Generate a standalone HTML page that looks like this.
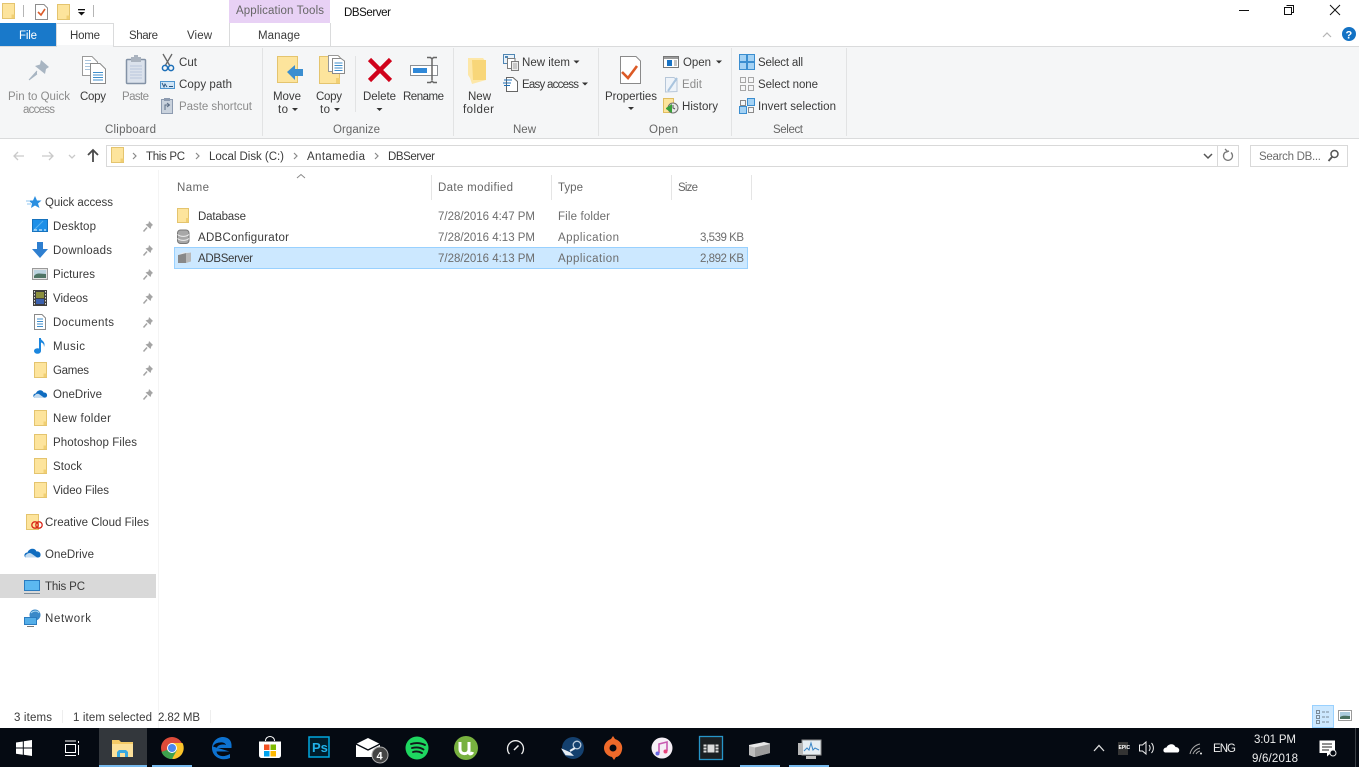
<!DOCTYPE html>
<html><head><meta charset="utf-8"><title>DBServer</title>
<style>
html,body{margin:0;padding:0;background:#fff;width:1359px;height:767px;overflow:hidden}
svg{display:block}
text{font-family:"Liberation Sans",sans-serif;font-size:11.5px;fill:#3a3a3a}
.d{fill:#8c8c8c}.g{fill:#666}.l{fill:#6d6d6d}.k{fill:#111}.w{fill:#fff}
</style></head><body>
<svg width="1359" height="767" viewBox="0 0 1359 767" xmlns="http://www.w3.org/2000/svg">
<defs>
<g id="f"><path d="M.5.5H12.5V15.5H.5Z" fill="#fde49c" stroke="#e4c46e"/><path d="M9.5 15V11.5H12.5V15Z" fill="#f1cf73"/></g>
<g id="p"><path d="M6 0 10 4 8.500 5 7.500 8 2.500 3.500 5.500 2.500Z" fill="#a4a4a4"/><path d="M4 6.500.5 10.500" stroke="#a4a4a4" stroke-width="1.500"/></g>
<g id="cloud"><path d="M1 12C-.5 10 1 7.500 3.500 7.500 5 3 11 2.500 12.500 6.500 15 6 17 8 16.500 10.500 16.300 12 15 12.500 14 12.500H2Z" fill="#0f6cc0"/><path d="M1 11C3 8 6 7 8 9L13 12.500H2Z" fill="#fff" opacity=".75"/></g>
<g id="ar"><path d="M0 0 3 3 0 6" fill="none" stroke="#8a8a8a" stroke-width="1.200"/></g>
<g id="dd"><path d="M0 0H6L3 3Z" fill="#333"/></g>
</defs>

<!-- title -->
<rect width="1359" height="767" fill="#fff"/>
<use href="#f" x="2" y="3"/>
<rect x="23" y="5" width="1" height="12" fill="#b5b5b5"/>
<path d="M35.500 4.500H44L47.500 8V19.500H35.500Z" fill="#fff" stroke="#8e8e8e"/><path d="M38 12 41 15 45 9" fill="none" stroke="#db5b2a" stroke-width="1.600"/>
<use href="#f" x="57" y="4"/>
<rect x="78" y="9" width="7" height="1.300" fill="#111"/><path d="M78 12H85L81.500 15.500Z" fill="#111"/>
<rect x="93" y="5" width="1" height="12" fill="#b5b5b5"/>

<rect x="229" y="0" width="101" height="23" fill="#e8d1f5"/>
<text x="236" y="14" textLength="88" class="g">Application Tools</text>
<text x="344" y="16" textLength="47" class="k">DBServer</text>

<rect x="1239" y="10" width="10" height="1" fill="#111"/>
<path d="M1286.500 5.500H1293.500V12.500H1291.500M1284.500 7.500H1291.500V14.500H1284.500Z" fill="#fff" stroke="#111"/>
<path d="M1330 5 1340 15M1340 5 1330 15" stroke="#111" stroke-width="1"/>

<!-- tabs -->
<rect x="0" y="46" width="1359" height="1" fill="#dadbdc"/>
<rect x="0" y="23" width="56" height="23" fill="#1979ca"/>
<text x="19" y="39" textLength="18" class="w">File</text>
<path d="M56.500 46.500V23.500H113.500V46.500" fill="#fff" stroke="#dadbdc"/><rect x="57" y="45" width="56" height="3" fill="#f5f6f7"/>
<text x="70" y="39" textLength="30">Home</text>
<text x="129" y="39" textLength="29">Share</text>
<text x="187" y="39" textLength="25">View</text>
<path d="M229.500 23V46M330.500 23V46" stroke="#dadbdc"/>
<text x="258" y="39" textLength="42">Manage</text>
<path d="M1323 37 1327 33 1331 37" fill="none" stroke="#b5b5b5" stroke-width="1.200"/>
<circle cx="1349" cy="34" r="7" fill="#1372c4"/><text x="1345.500" y="38.500" class="w" style="font-weight:bold;font-size:11px">?</text>

<!-- ribbon -->
<rect x="0" y="47" width="1359" height="91" fill="#f5f6f7"/>
<rect x="0" y="138" width="1359" height="1" fill="#dadbdc"/>
<g fill="#e2e3e4"><rect x="262" y="48" width="1" height="88"/><rect x="453" y="48" width="1" height="88"/><rect x="598" y="48" width="1" height="88"/><rect x="731" y="48" width="1" height="88"/><rect x="846" y="48" width="1" height="88"/><rect x="355" y="56" width="1" height="56"/></g>

<!-- pin -->
<path d="M41 60 49 67 46 69 45 74 35 66 40 64.500Z" fill="#a8b5c2"/><path d="M37 71 29 80 37 74" fill="#a8b5c2" stroke="#a8b5c2"/>
<text x="8" y="100" textLength="62" class="d">Pin to Quick</text>
<text x="23" y="113" textLength="32" class="d">access</text>
<!-- copy -->
<path d="M82.500 56.500H92L97.500 62V75.500H82.500Z" fill="#fff" stroke="#9a9a9a"/>
<path d="M85 60.500H91M85 63.500H95M85 66.500H95M85 69.500H95" stroke="#a9c4dc"/>
<path d="M90.500 63.500H100L105.500 69V83.500H90.500Z" fill="#fff" stroke="#8a8a8a"/>
<path d="M93 72.500H103M93 75H103M93 77.500H103M93 80H103" stroke="#3f8ecb"/>
<text x="80" y="100" textLength="26">Copy</text>
<!-- paste -->
<rect x="126.500" y="59.500" width="19" height="24" rx="1" fill="#dbe2ec" stroke="#8392a6" stroke-width="1.500"/>
<rect x="131" y="57" width="10" height="5" fill="#aab3bf"/><rect x="134" y="55" width="4" height="3" fill="#aab3bf"/>
<path d="M130 66H142M130 69H142M130 72H142M130 75H142M130 78H142" stroke="#b9c7dc"/>
<text x="122" y="100" textLength="27" class="d">Paste</text>
<!-- cut -->
<path d="M172 54 165 66M163 54 170 66" stroke="#666" stroke-width="1.300" fill="none"/>
<circle cx="165" cy="68" r="2.600" fill="none" stroke="#1c6fb8" stroke-width="1.500"/><circle cx="171" cy="68" r="2.600" fill="none" stroke="#1c6fb8" stroke-width="1.500"/>
<text x="179" y="66" textLength="18">Cut</text>
<rect x="160.500" y="81.500" width="14" height="7" fill="#cfe4f6" stroke="#4d94cf"/><path d="M162 83 164 87 165 84 167 87M169 86.500H173" stroke="#27527e" fill="none" stroke-width=".9"/>
<text x="179" y="88" textLength="53">Copy path</text>
<rect x="161.500" y="99.500" width="11" height="14" fill="#c9d2dd" stroke="#8d9bb0"/><rect x="164" y="98" width="6" height="3" fill="#8d9bb0"/><path d="M165 110V105H169M167 103 169.500 105 167 107" stroke="#5c6d85" fill="none"/>
<text x="179" y="110" textLength="73" class="d">Paste shortcut</text>
<text x="105" y="133" textLength="51" class="g">Clipboard</text>
<!-- move -->
<path d="M277.500 56.500H297.500V82.500H277.500Z" fill="#fde49c" stroke="#e4c46e"/>
<path d="M287 72 295 65V69H303V76H295V80Z" fill="#3b8ed0"/>
<text x="273" y="100" textLength="28">Move</text>
<text x="278" y="113" textLength="10">to</text><use href="#dd" x="292" y="108"/>
<!-- copy to -->
<path d="M319.500 56.500H339.500V83.500H319.500Z" fill="#fde49c" stroke="#e4c46e"/><path d="M336 78V83H340V78Z" fill="#f1cf73"/>
<path d="M328.500 55.500H338L341 58.500V71.500H328.500Z" fill="#fff" stroke="#999"/>
<path d="M332.500 58.500H341L344.500 61V73.500H332.500Z" fill="#fff" stroke="#8a8a8a"/><path d="M334.500 63H342.500M334.500 65.500H342.500M334.500 68H342.500M334.500 70.500H342.500" stroke="#3f8ecb"/>
<text x="316" y="100" textLength="26">Copy</text>
<text x="320" y="113" textLength="10">to</text><use href="#dd" x="334" y="108"/>
<!-- delete -->
<path d="M369.500 59.500 390.500 80.500M390.500 59.500 369.500 80.500" stroke="#d0021b" stroke-width="4.500"/>
<text x="363" y="100" textLength="33">Delete</text><use href="#dd" x="376.500" y="108"/>
<!-- rename -->
<path d="M410.500 65.500H437.500V75.500H410.500Z" fill="#fff" stroke="#8b8f94"/><rect x="413" y="68" width="14" height="5" fill="#2f88d8"/>
<path d="M427 57.500H430.500L432 59 433.500 57.500H437M432 59V80M427 82.500H430.500L432 81 433.500 82.500H437" fill="none" stroke="#666" stroke-width="1.500"/>
<text x="403" y="100" textLength="41">Rename</text>
<text x="333" y="133" textLength="47" class="g">Organize</text>
<!-- new folder -->
<path d="M468 58H483L486 62V80L472 84 470 78 468 75Z" fill="#fde7a8"/><path d="M472 60H486V80H473Z" fill="#f8d679"/>
<text x="468" y="100" textLength="23">New</text>
<text x="463" y="113" textLength="31">folder</text>
<!-- new item -->
<rect x="503.500" y="54.500" width="11" height="9" fill="#e9f2fa" stroke="#4f86b3"/><rect x="505" y="56" width="3" height="2" fill="#4f86b3"/>
<path d="M507.500 58.500H515V68.500H507.500Z" fill="#fff" stroke="#7c7c7c"/><path d="M511.500 61.500H518.500V70.500H511.500Z" fill="#eee" stroke="#7c7c7c"/><path d="M513 64H517M513 66H517M513 68H517" stroke="#8a8a8a" stroke-width=".8"/>
<text x="522" y="66" textLength="48">New item</text><use href="#dd" x="573.500" y="60.500"/>
<path d="M506.500 77.500H513L517.500 81.500V91.500H506.500Z" fill="#fff" stroke="#666"/><path d="M504 80H512M503 83H511M504 85.500H510" stroke="#1f6fb5"/>
<text x="522" y="88" textLength="57">Easy access</text><use href="#dd" x="582" y="82.500"/>
<text x="513" y="133" textLength="23" class="g">New</text>
<!-- properties -->
<path d="M620.500 56.500H636L640.500 61V83.500H620.500Z" fill="#fff" stroke="#8a8a8a"/><path d="M622 72 628 78 637 66" fill="none" stroke="#dc5a26" stroke-width="2.600"/>
<text x="605" y="100" textLength="52">Properties</text><use href="#dd" x="628" y="107"/>
<!-- open -->
<rect x="663.500" y="56.500" width="15" height="11" fill="#fff" stroke="#777"/><rect x="664" y="57" width="14" height="2" fill="#9b9b9b"/><rect x="667" y="60" width="5" height="6" fill="#1973c4"/><path d="M674 61H677M674 63H677M674 65H677" stroke="#888"/>
<text x="683" y="66" textLength="28">Open</text><use href="#dd" x="716" y="60.500"/>
<path d="M665.500 77.500H674L677 80V91.500L665.500 92Z" fill="#eef3f9" stroke="#b6c6d8"/><path d="M668 91 677 78" stroke="#a9c4de" stroke-width="2"/>
<text x="682" y="88" textLength="20" class="d">Edit</text>
<rect x="663.500" y="98.500" width="10" height="14" fill="#fde49c" stroke="#e0bd60"/>
<circle cx="673" cy="108" r="5" fill="#e9e9e9" stroke="#6f6f6f"/><path d="M673 105V108L675 109" stroke="#555" fill="none"/><path d="M666 108 672 104V113L666 109Z" fill="#3aa13a"/>
<text x="682" y="110" textLength="36">History</text>
<text x="649" y="133" textLength="29" class="g">Open</text>
<!-- select -->
<g stroke="#3b8ed0"><rect x="739.500" y="54.500" width="7" height="7" fill="#a4d2f4"/><rect x="747.500" y="54.500" width="7" height="7" fill="#a4d2f4"/><rect x="739.500" y="62.500" width="7" height="7" fill="#a4d2f4"/><rect x="747.500" y="62.500" width="7" height="7" fill="#a4d2f4"/></g>
<text x="758" y="66" textLength="45">Select all</text>
<g stroke="#a6a6a6" fill="none"><rect x="740.500" y="77.500" width="5" height="5"/><rect x="748.500" y="77.500" width="5" height="5"/><rect x="740.500" y="85.500" width="5" height="5"/><rect x="748.500" y="85.500" width="5" height="5"/></g>
<text x="758" y="88" textLength="60">Select none</text>
<rect x="740.500" y="100.500" width="5" height="5" fill="none" stroke="#8a8a8a"/><rect x="747.500" y="98.500" width="7" height="7" fill="#a4d2f4" stroke="#3b8ed0"/><rect x="739.500" y="106.500" width="7" height="7" fill="#a4d2f4" stroke="#3b8ed0"/><rect x="748.500" y="107.500" width="5" height="5" fill="none" stroke="#8a8a8a"/>
<text x="758" y="110" textLength="78">Invert selection</text>
<text x="773" y="133" textLength="30" class="g">Select</text>

<!-- address bar -->
<g fill="none" stroke-width="1.300">
<path d="M24 156H14M18 152 14 156 18 160" stroke="#c9c9c9"/>
<path d="M42 156H53M49 152 53 156 49 160" stroke="#c9c9c9"/>
<path d="M69 155 72 158 75 155" stroke="#c9c9c9"/>
<path d="M93 162V150M88 155 93 150 98 155" stroke="#4a4a4a" stroke-width="1.800"/>
</g>
<rect x="106.500" y="145.500" width="1132" height="21" fill="#fff" stroke="#d9d9d9"/>
<use href="#f" x="111" y="147" />
<use href="#ar" x="133" y="153"/><use href="#ar" x="196" y="153"/><use href="#ar" x="294" y="153"/><use href="#ar" x="375" y="153"/>
<text x="146" y="160" textLength="39">This PC</text>
<text x="209" y="160" textLength="75">Local Disk (C:)</text>
<text x="307" y="160" textLength="58">Antamedia</text>
<text x="388" y="160" textLength="47">DBServer</text>
<path d="M1204 154 1208 158 1212 154" fill="none" stroke="#555" stroke-width="1.500"/>
<rect x="1217" y="146" width="1" height="20" fill="#d9d9d9"/>
<path d="M1231 152.500A4.500 4.500 0 1 1 1225 152.500L1229 151M1225 149 1228 152" fill="none" stroke="#777" stroke-width="1.300"/>
<rect x="1250.500" y="145.500" width="97" height="21" fill="#fff" stroke="#d9d9d9"/>
<text x="1259" y="160" textLength="62" class="l">Search DB...</text>
<circle cx="1334.500" cy="154" r="3.500" fill="none" stroke="#555" stroke-width="1.500"/><path d="M1332 157 1328.500 161" stroke="#555" stroke-width="1.800"/>

<!-- sidebar -->
<path d="M35 196 37 200.500H41.500L38 203.500 39.500 208 35 205.500 31 208 32 203.500 28.500 200.500 33 200.500Z" fill="#2b8fe0"/><path d="M26 201H30M27 204H31" stroke="#8cc4f0"/>
<text x="45" y="206" textLength="68">Quick access</text>

<rect x="32.500" y="219.500" width="15" height="12" fill="#1e90e8" stroke="#1672bd"/><path d="M33 231 43 221" stroke="#5bb2f0"/><path d="M34 230H46" stroke="#fff" stroke-dasharray="3 2"/>
<text x="53" y="230" textLength="43">Desktop</text><use href="#p" x="143" y="221"/>

<path d="M37 242H43V249H48L40 258 32 249H37Z" fill="#2e7fd0"/>
<text x="53" y="254" textLength="59">Downloads</text><use href="#p" x="143" y="245"/>

<rect x="32.500" y="268.500" width="15" height="11" fill="#e3e3e3" stroke="#9a9a9a"/><rect x="34" y="270" width="12" height="8" fill="#bcd4e0"/><path d="M34 276C37 272 41 274 46 274V278H34Z" fill="#4f7565"/>
<text x="53" y="278" textLength="42">Pictures</text><use href="#p" x="143" y="269"/>

<rect x="33" y="290" width="14" height="16" fill="#3e3e3e"/><rect x="36" y="292" width="8" height="6" fill="#8b8f3d"/><rect x="36" y="299" width="8" height="5" fill="#3b60ad"/><path d="M34.500 291V305M45.500 291V305" stroke="#ddd" stroke-dasharray="1.500 1.500"/>
<text x="53" y="302" textLength="35">Videos</text><use href="#p" x="143" y="293"/>

<path d="M34.500 314.500H42L45.500 318V329.500H34.500Z" fill="#fff" stroke="#8a8a8a"/><path d="M37 319H43M37 321.500H43M37 324H43M37 326.500H43" stroke="#3f8ecb"/>
<text x="53" y="326" textLength="61">Documents</text><use href="#p" x="143" y="317"/>

<path d="M40 338V351" stroke="#1b86de" stroke-width="2"/><ellipse cx="37.500" cy="351" rx="3.500" ry="2.800" fill="#1b86de"/><path d="M40 338C42 341 46 342 44 347 44 343 42 343 40 342Z" fill="#1b86de"/>
<text x="53" y="350" textLength="32">Music</text><use href="#p" x="143" y="341"/>

<use href="#f" x="34" y="362"/>
<text x="53" y="374" textLength="36">Games</text><use href="#p" x="143" y="365"/>

<use href="#cloud" transform="translate(33 387) scale(.85)"/>
<text x="53" y="398" textLength="49">OneDrive</text><use href="#p" x="143" y="389"/>

<use href="#f" x="34" y="410"/><text x="53" y="422" textLength="58">New folder</text>
<use href="#f" x="34" y="434"/><text x="53" y="446" textLength="84">Photoshop Files</text>
<use href="#f" x="34" y="458"/><text x="53" y="470" textLength="29">Stock</text>
<use href="#f" x="34" y="482"/><text x="53" y="494" textLength="56">Video Files</text>

<use href="#f" x="26" y="514"/>
<circle cx="35" cy="525" r="3.200" fill="none" stroke="#d8281a" stroke-width="1.300"/><circle cx="39" cy="525" r="3.200" fill="none" stroke="#d8281a" stroke-width="1.300"/>
<text x="45" y="526" textLength="104">Creative Cloud Files</text>
<use href="#cloud" x="24" y="545"/><text x="45" y="558" textLength="49">OneDrive</text>

<rect x="0" y="574" width="156" height="24" fill="#d9d9d9"/>
<rect x="24.500" y="580.500" width="15" height="10" fill="#5cb8f0" stroke="#2a7cc0"/><rect x="24" y="593" width="16" height="1" fill="#7a8a98"/>
<text x="45" y="590" textLength="40">This PC</text>

<circle cx="35" cy="615" r="5.500" fill="#3a89c8"/><path d="M31 613C34 610 38 611 39 613" stroke="#a9d8f3" fill="none"/>
<rect x="24.500" y="617.500" width="12" height="7" fill="#54aee8" stroke="#2a7cc0"/><path d="M27 626.500H34" stroke="#777"/>
<text x="45" y="622" textLength="46">Network</text>

<rect x="158" y="170" width="1" height="558" fill="#f4f4f4"/>

<!-- file list -->
<path d="M297 178 301 174.500 305 178" fill="none" stroke="#8a8a8a"/>
<text x="177" y="191" textLength="32" class="g">Name</text>
<text x="438" y="191" textLength="75" class="g">Date modified</text>
<text x="558" y="191" textLength="25" class="g">Type</text>
<text x="678" y="191" textLength="20" class="g">Size</text>
<g fill="#e5e5e5"><rect x="431" y="175" width="1" height="25"/><rect x="551" y="175" width="1" height="25"/><rect x="671" y="175" width="1" height="25"/><rect x="751" y="175" width="1" height="25"/></g>

<path d="M177.500 208.500H188.500V222.500H177.500Z" fill="#fde49c" stroke="#e4c46e"/><path d="M186 222V218H188.500V222Z" fill="#f1cf73"/>
<text x="198" y="220" textLength="48">Database</text>
<text x="438" y="220" textLength="97" class="l">7/28/2016 4:47 PM</text>
<text x="558" y="220" textLength="52" class="l">File folder</text>

<rect x="177.500" y="230" width="11.500" height="13.500" rx="3" fill="#a8a8a8" stroke="#777"/><path d="M177.500 234.500C180.500 237 186 237 189 234.500M177.500 238.500C180.500 241 186 241 189 238.500" stroke="#eee" fill="none"/>
<text x="198" y="241" textLength="91">ADBConfigurator</text>
<text x="438" y="241" textLength="97" class="l">7/28/2016 4:13 PM</text>
<text x="558" y="241" textLength="61" class="l">Application</text>
<text x="700" y="241" textLength="44" class="l">3,539 KB</text>

<rect x="174.500" y="247.500" width="573" height="21" fill="#cce8ff" stroke="#99d1ff"/>
<path d="M178 255 186 253V263L178 263Z" fill="#888"/><path d="M186 253 191 252.500V261.500L186 263Z" fill="#b8b8b8"/><path d="M178 255 183 252.500 191 252.500 186 253Z" fill="#e8e8e8"/>
<text x="198" y="262" textLength="55">ADBServer</text>
<text x="438" y="262" textLength="97" class="l">7/28/2016 4:13 PM</text>
<text x="558" y="262" textLength="61" class="l">Application</text>
<text x="700" y="262" textLength="44" class="l">2,892 KB</text>

<!-- status -->
<text x="14" y="721" textLength="38">3 items</text>
<rect x="62" y="710" width="1" height="13" fill="#eee"/>
<text x="73" y="721" textLength="79">1 item selected</text>
<text x="158" y="721" textLength="42">2.82 MB</text>
<rect x="210" y="710" width="1" height="13" fill="#eee"/>
<rect x="1312.500" y="705.500" width="21" height="22" fill="#cce8ff" stroke="#99d1ff"/>
<g fill="none" stroke="#7a8a98"><rect x="1316.500" y="710.500" width="3" height="3"/><rect x="1316.500" y="715.500" width="3" height="3"/><rect x="1316.500" y="720.500" width="3" height="3"/><path d="M1322 712H1330M1322 717H1330M1322 722H1330" stroke-dasharray="3 1"/></g>
<rect x="1338.500" y="710.500" width="13" height="10" fill="#fff" stroke="#9a9a9a"/><rect x="1340" y="712" width="10" height="7" fill="#aacbdc"/><path d="M1340 717C1343 715 1346 716 1350 716V719H1340Z" fill="#48705f"/>

<!-- taskbar -->
<rect x="0" y="728" width="1359" height="39" fill="#050a12"/>
<g fill="#fff"><path d="M16 742.500 22.800 741.500V747.500H16ZM23.800 741.300 32 740V747.500H23.800ZM16 748.500H22.800V754.700L16 753.700ZM23.800 748.500H32V756L23.800 754.800Z"/></g>
<path d="M65.500 744.500H75.500V752.500H65.500ZM65 741H76M65 755.500H76M78.500 741V743M78.500 745V755" fill="none" stroke="#fff" stroke-width="1"/>

<rect x="99" y="728" width="48" height="39" fill="#33373c"/>
<rect x="99" y="765" width="48" height="2" fill="#76b9ed"/>
<path d="M112 740H119L121 742H133V757H112Z" fill="#f3c966"/><rect x="112" y="744" width="21" height="13" fill="#fbe09a"/>
<path d="M117 757V752L119 750H126L128 752V757H125V753H120V757Z" fill="#3aa9e0"/>

<rect x="152" y="765" width="40" height="2" fill="#76b9ed"/>
<circle cx="172" cy="748" r="11" fill="#dd4b3a"/>
<path d="M172 748 163 754A11 11 0 0 0 172.500 759Z" fill="#3ea24d"/><path d="M172 748 172.500 759A11 11 0 0 0 182.500 743H172Z" fill="#fbc32a"/><path d="M172 748 161.500 752A11 11 0 0 0 172 759L177 750Z" fill="#3ea24d"/>
<circle cx="172" cy="748" r="5" fill="#fff"/><circle cx="172" cy="748" r="4" fill="#4a87ee"/>

<path d="M229.500 752H216.500C217 757 224 758 230 754.500V758.500C222 762 212.500 758 212 749 212 741 219 736 226 738 230.500 739.500 232 743 231.500 748.500H217C217 744.500 225.500 744.500 226 745.500 225 741.500 215 742 213 747" fill="#0d72d0" transform="translate(0 -.5)"/>

<path d="M259 741.500H281V755C281 757 280 758 278 758H262C260 758 259 757 259 755Z" fill="#fff"/><path d="M265.500 741C265.500 735 274.500 735 274.500 741" fill="none" stroke="#fff"/>
<rect x="264" y="744.500" width="5.500" height="5.500" fill="#f25022"/><rect x="270.500" y="744.500" width="5.500" height="5.500" fill="#7fba00"/><rect x="264" y="751" width="5.500" height="5.500" fill="#00a4ef"/><rect x="270.500" y="751" width="5.500" height="5.500" fill="#ffb900"/>

<rect x="309" y="737" width="20" height="20" fill="#001d2b" stroke="#00a8e0" stroke-width="1.500"/>
<text x="312" y="752" style="font-size:13px;font-weight:bold;fill:#22b1e8">Ps</text>

<path d="M356 744 368 738 380 744V757H356Z" fill="#fff"/><path d="M356 744 368 750 380 744" fill="none" stroke="#050a12" stroke-width="1.300"/>
<circle cx="380" cy="755" r="8" fill="#444" stroke="#aaa"/><text x="376.500" y="759.500" class="w" style="font-size:11px;font-weight:bold">4</text>

<circle cx="417" cy="748" r="11.500" fill="#1ed760"/>
<path d="M411 744C416 742.500 421 743 425 745M412 748C416 747 420.500 747.500 423.500 749.500M413 752C416 751 419.500 751.500 422 753" stroke="#12171a" stroke-width="1.900" fill="none" stroke-linecap="round"/>

<circle cx="466" cy="748" r="12" fill="#78b13f"/>
<path d="M460 742V749C460 755 468 755 469 750M469 742V752C469 755 472 754 472.500 752" fill="none" stroke="#fff" stroke-width="3"/>

<path d="M509.500 754A8 8 0 1 1 521.500 754" fill="none" stroke="#eee" stroke-width="1.300"/><path d="M514 750 518.500 745.500" stroke="#eee" stroke-width="1.500"/>

<circle cx="573" cy="748" r="11" fill="#14406e"/>
<path d="M563 750 570 753 572 755 566 754.500Z" fill="#e8eef5" stroke="#e8eef5" stroke-width="1.500"/>
<circle cx="577" cy="745" r="3.800" fill="none" stroke="#b9c9da" stroke-width="1.300"/><path d="M570 751 575 748" stroke="#e8eef5" stroke-width="2"/>

<path d="M613 736 615 739C621 741 623 746 622 750 621 755 618 757 616 757L614 760 612 757C607 756 604 752 604 748 604 743 608 740 611 739Z" fill="#ef6a2a"/><circle cx="613" cy="748" r="3.500" fill="#050a12"/>

<circle cx="662" cy="748" r="10.500" fill="#f5eef5"/>
<path d="M659 753V744L667 742V751" fill="none" stroke="#c85bb0" stroke-width="1.600"/><circle cx="657.500" cy="753.500" r="2" fill="#6a69e0"/><circle cx="665.500" cy="751.500" r="2" fill="#e8447b"/>

<rect x="699.500" y="736.500" width="23" height="23" fill="#1b1f22" stroke="#2795c8" stroke-width="1.300"/>
<path d="M703.500 744.500H718.500V752.500H703.500Z" fill="#dcdcdc"/><path d="M707 744V753M715 744V753M703 747H707M703 750H707M715 747H719M715 750H719" stroke="#1b1f22"/>

<rect x="740" y="765" width="40" height="2" fill="#76b9ed"/>
<path d="M749 745 764 742 770 743.500 770 753 754 757 749 755Z" fill="#e8e8e8"/><path d="M749 746 755 747.500V757L749 755Z" fill="#bdbdbd"/><path d="M755 747.500 770 744V753L755 757Z" fill="#9c9c9c"/>

<rect x="789" y="765" width="40" height="2" fill="#76b9ed"/>
<rect x="802" y="740" width="19" height="15" fill="#e7eef3" stroke="#8e8e8e"/><rect x="798" y="743" width="5" height="12" fill="#b7b7b7"/>
<path d="M804 751 807 748 809 750 811 743 813 750 815 748 819 750" fill="none" stroke="#3b86c7"/><rect x="806" y="756" width="10" height="3" fill="#bcbcbc"/>

<!-- tray -->
<path d="M1094 751 1099 745.500 1104 751" fill="none" stroke="#ddd" stroke-width="1.300"/>
<rect x="1118" y="742" width="10" height="13" fill="#333"/><text x="1118.500" y="749" class="w" style="font-size:5px;font-weight:bold">EPIC</text>
<path d="M1139.500 745H1142.500L1146 742V754L1142.500 751H1139.500Z" fill="none" stroke="#eee"/><path d="M1149 745C1150.500 747 1150.500 749 1149 751M1151.500 743C1154 746 1154 750 1151.500 753" fill="none" stroke="#eee"/>
<path d="M1164 752C1162.500 750 1164 747.500 1166.500 747.500 1168 743.500 1174 743 1175.500 747 1178 747 1180 749 1179 751.500L1178 752.500H1165Z" fill="#fff"/>
<path d="M1190 754C1191 749 1195 745 1200 744M1193 754C1194 751 1196.500 749 1200 748M1196 754C1197 752.500 1198 751.500 1200 751" stroke="#aaa" fill="none"/><circle cx="1201" cy="753.500" r="1" fill="#eee"/>
<text x="1213" y="752" textLength="23" style="fill:#eee">ENG</text>
<text x="1254" y="743" textLength="42" style="fill:#eee">3:01 PM</text>
<text x="1252" y="762" textLength="46" style="fill:#eee">9/6/2018</text>
<path d="M1319.500 740.500H1335V753H1331L1327 756.500V753H1319.500Z" fill="#fff"/><path d="M1322 744H1332M1322 747H1332M1322 750H1329" stroke="#222"/><circle cx="1333" cy="753" r="3" fill="#050a12" stroke="#eee"/>
<rect x="1355" y="728" width="1" height="39" fill="#3a3f45"/>
</svg>
</body></html>
